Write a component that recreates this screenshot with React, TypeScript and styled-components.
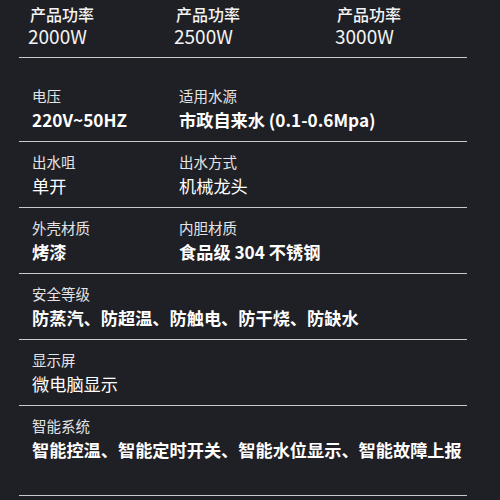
import React from "react";
import styled, { createGlobalStyle } from "styled-components";

interface Spec {
  label: string;
  value: string;
  bold?: boolean;
}

const powers = ["2000W", "2500W", "3000W"];

const rows: Spec[][] = [
  [
    { label: "电压", value: "220V~50HZ", bold: true },
    { label: "适用水源", value: "市政自来水 (0.1-0.6Mpa)", bold: true },
  ],
  [
    { label: "出水咀", value: "单开" },
    { label: "出水方式", value: "机械龙头" },
  ],
  [
    { label: "外壳材质", value: "烤漆", bold: true },
    { label: "内胆材质", value: "食品级 304 不锈钢", bold: true },
  ],
  [{ label: "安全等级", value: "防蒸汽、防超温、防触电、防干烧、防缺水", bold: true }],
  [{ label: "显示屏", value: "微电脑显示" }],
  [{ label: "智能系统", value: "智能控温、智能定时开关、智能水位显示、智能故障上报", bold: true }],
];

const GlobalStyle = createGlobalStyle`
  html, body {
    margin: 0;
    padding: 0;
    background: #1f2025;
  }
  body {
    font-family: "Noto Sans CJK SC", "Noto Sans", sans-serif;
    color: #fff;
  }
`;

const Page = styled.div`
  width: 500px;
  height: 500px;
  overflow: hidden;
  background: #1f2025;
  padding-left: 19px;
  box-sizing: border-box;
`;

const Sheet = styled.div`
  width: 448px;
`;

const PowerRow = styled.div`
  display: grid;
  grid-template-columns: 146px 161px 1fr;
  padding: 5px 0 9px 11px;
  border-bottom: 1px solid #c9c9cb;
  margin-bottom: 18px;
`;

const PowerCell = styled.div`
  display: flex;
  flex-direction: column;
`;

const PowerLabel = styled.div`
  font-size: 16px;
  line-height: 19px;
  font-weight: 500;
  color: #f4f4f4;
`;

const PowerValue = styled.div`
  font-size: 19px;
  line-height: 24px;
  font-weight: 400;
  color: #f4f4f4;
  margin-left: -2px;
`;

const SpecRow = styled.div<{ $last?: boolean }>`
  display: grid;
  grid-template-columns: 147px 1fr;
  padding: 11px 0 ${(p) => (p.$last ? "33px" : "9px")} 13px;
  border-bottom: 1px solid #c9c9cb;
`;

const SpecCell = styled.div`
  display: flex;
  flex-direction: column;
  gap: 3px;
  white-space: nowrap;
`;

const Label = styled.div`
  font-size: 14.5px;
  line-height: 18px;
  color: #e4e4e6;
`;

const Value = styled.div<{ $bold?: boolean }>`
  font-size: 17.2px;
  line-height: 24px;
  font-weight: ${(p) => (p.$bold ? 700 : 400)};
  color: #fff;
`;

export default function App() {
  return (
    <>
      <GlobalStyle />
      <Page>
        <Sheet>
          <PowerRow>
            {powers.map((p) => (
              <PowerCell key={p}>
                <PowerLabel>产品功率</PowerLabel>
                <PowerValue>{p}</PowerValue>
              </PowerCell>
            ))}
          </PowerRow>
          {rows.map((row, i) => (
            <SpecRow key={i} $last={i === rows.length - 1}>
              {row.map((s) => (
                <SpecCell key={s.label}>
                  <Label>{s.label}</Label>
                  <Value $bold={s.bold}>{s.value}</Value>
                </SpecCell>
              ))}
            </SpecRow>
          ))}
        </Sheet>
      </Page>
    </>
  );
}
